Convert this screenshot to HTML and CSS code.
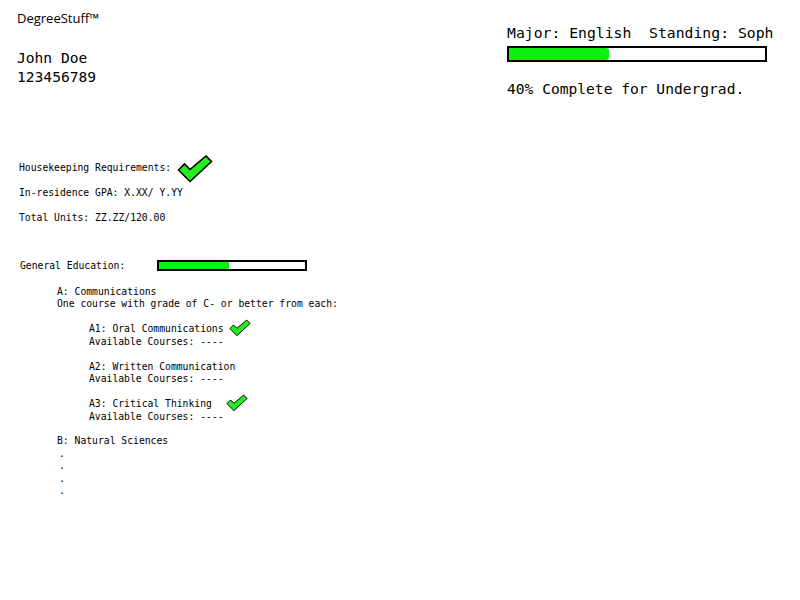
FILE: index.html
```html
<!DOCTYPE html>
<html>
<head>
<meta charset="utf-8">
<link rel="stylesheet" href="styles.css">
</head>
<body>
<div class="header">
  <div class="brand-col">
    <div class="brand">DegreeStuff™</div>
    <div class="student">
      <div class="big">John Doe</div>
      <div class="big">123456789</div>
    </div>
  </div>
  <div class="status-col">
    <div class="big">Major: English&nbsp;&nbsp;Standing: Soph</div>
    <div class="bar bar-major"><div class="fill" style="width:39%"></div></div>
    <div class="big pct">40% Complete for Undergrad.</div>
  </div>
</div>

<div class="house">
  <div class="row"><span>Housekeeping Requirements:</span><svg class="check check-big" viewBox="0 0 36 28"><polygon points="1.5,15 7.5,9 13,14.5 29,1 34.5,6.5 13,26.5" /></svg></div>
  <div class="row">In-residence GPA: X.XX/ Y.YY</div>
  <div class="row">Total Units: ZZ.ZZ/120.00</div>
</div>

<div class="ge">
  <span class="ge-label">General Education:</span>
  <div class="bar bar-ge"><div class="fill" style="width:48%"></div></div>
</div>

<div class="area">
  <div class="line">A: Communications</div>
  <div class="line">One course with grade of C- or better from each:</div>
  <div class="sub">
    <div class="line">A1: Oral Communications<svg class="check check-small c1" viewBox="0 0 36 28"><polygon points="1.5,15 7.5,9 13,14.5 29,1 34.5,6.5 13,26.5" /></svg></div>
    <div class="line">Available Courses: ----</div>
  </div>
  <div class="sub">
    <div class="line">A2: Written Communication</div>
    <div class="line">Available Courses: ----</div>
  </div>
  <div class="sub">
    <div class="line">A3: Critical Thinking<svg class="check check-small c3" viewBox="0 0 36 28"><polygon points="1.5,15 7.5,9 13,14.5 29,1 34.5,6.5 13,26.5" /></svg></div>
    <div class="line">Available Courses: ----</div>
  </div>
  <div class="line gap">B: Natural Sciences</div>
  <div class="line dot">.</div>
  <div class="line dot">.</div>
  <div class="line dot">.</div>
  <div class="line dot">.</div>
</div>
</body>
</html>
```

FILE: styles.css
```css
body {
  margin: 0;
  background: #fff;
  color: #000;
  font-family: "DejaVu Sans Mono", "Liberation Mono", monospace;
}

.header {
  display: flex;
}

.brand-col {
  padding-left: 17px;
  padding-top: 9px;
  width: 490px;
}

.brand {
  font-family: "Open Sans", "Liberation Sans", sans-serif;
  font-size: 13px;
  line-height: 18px;
}

.student {
  margin-top: 20.5px;
}

.big {
  font-size: 14.6px;
  line-height: 19px;
  white-space: nowrap;
}

.status-col {
  padding-top: 22.5px;
}

.status-col .big:first-child {
  font-size: 14.75px;
}

.bar {
  border: 2px solid #000;
  background: #fff;
  box-sizing: border-box;
}

.fill {
  height: 100%;
  background: #11ee11;
  border-radius: 0 3px 3px 0;
}

.bar-major {
  width: 260px;
  height: 16px;
  margin-top: 4.5px;
}

.pct {
  margin-top: 16.5px;
}

.house {
  margin-top: 57px;
  padding-left: 19px;
  font-size: 9.72px;
}

.row {
  height: 25px;
  display: flex;
  align-items: center;
  white-space: pre;
}

.check polygon {
  fill: #22ee22;
  stroke: #000;
  stroke-width: 1.6;
  stroke-linejoin: miter;
}

.check-big {
  width: 36px;
  height: 28px;
  margin-left: 6px;
  margin-top: -1px;
  margin-bottom: -4px;
  flex: none;
}

.ge {
  display: flex;
  align-items: center;
  margin-top: 30px;
  padding-left: 20px;
  font-size: 9.72px;
  height: 12.5px;
}

.ge-label {
  width: 137px;
  flex: none;
}

.bar-ge {
  width: 150px;
  height: 11px;
}

.bar-ge .fill {
  border-radius: 0;
}

.area {
  margin-top: 13.5px;
  padding-left: 57px;
  font-size: 9.72px;
}

.line {
  line-height: 12.5px;
  height: 12.5px;
  white-space: pre;
  display: flex;
  align-items: center;
}

.sub {
  padding-left: 32px;
  margin-top: 12.5px;
}

.check-small {
  width: 22px;
  height: 18px;
  flex: none;
}

.c1 {
  margin-left: 5px;
  margin-top: -3px;
}

.c3 {
  margin-left: 14px;
  margin-top: -3px;
}

.gap {
  margin-top: 12px;
}

.dot {
  padding-left: 2px;
}
```
